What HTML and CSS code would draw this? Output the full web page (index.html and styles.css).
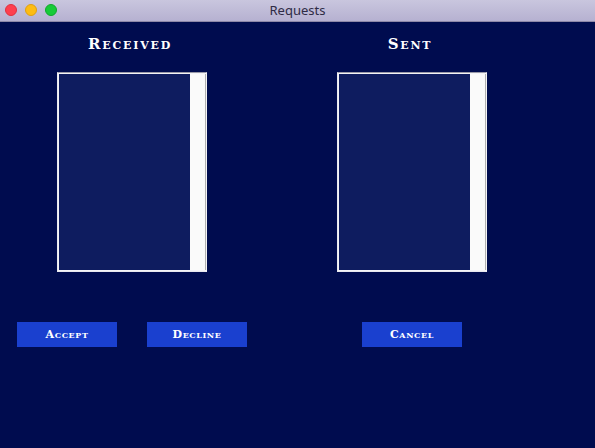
FILE: index.html
```html
<!DOCTYPE html>
<html>
<head>
<meta charset="utf-8">
<title>Requests</title>
<link rel="stylesheet" href="styles.css">
</head>
<body>
<div class="window">
  <div class="titlebar">
    <div class="lights">
      <span class="light red"></span>
      <span class="light yellow"></span>
      <span class="light green"></span>
    </div>
    <div class="title">Requests</div>
  </div>
  <div class="content">
    <div class="panels">
      <div class="panel">
        <h2 class="heading">Received</h2>
        <div class="listbox">
          <div class="list"></div>
          <div class="scrollbar"></div>
        </div>
      </div>
      <div class="panel">
        <h2 class="heading">Sent</h2>
        <div class="listbox">
          <div class="list"></div>
          <div class="scrollbar"></div>
        </div>
      </div>
    </div>
    <div class="buttons">
      <button class="btn">Accept</button>
      <button class="btn btn-decline">Decline</button>
      <button class="btn btn-cancel">Cancel</button>
    </div>
  </div>
</div>
</body>
</html>
```

FILE: styles.css
```css
html, body {
  margin: 0;
  padding: 0;
  background: #000c4f;
}
.window {
  width: 595px;
  height: 448px;
  display: flex;
  flex-direction: column;
  background: #000c4f;
  overflow: hidden;
}
.titlebar {
  height: 21px;
  border-bottom: 1px solid #8e89a8;
  background: linear-gradient(#c9c6de, #b6b1d1);
  display: flex;
  align-items: center;
  justify-content: center;
  position: relative;
}
.lights {
  position: absolute;
  left: 5px;
  top: 4px;
  display: flex;
  gap: 8px;
}
.light {
  width: 12px;
  height: 12px;
  border-radius: 50%;
  box-sizing: border-box;
}
.red { background: #fe3f4f; border: 1px solid #e0303f; }
.yellow { background: #fdbc13; border: 1px solid #e0a010; }
.green { background: #17cb38; border: 1px solid #10a82c; }
.title {
  font-family: "Noto Sans", "DejaVu Sans", sans-serif;
  font-size: 13px;
  color: #2f2b45;
  line-height: 21px;
}
.content {
  flex: 1;
  padding: 13px 0 0 0;
}
.panels {
  display: grid;
  grid-template-columns: 150px 150px;
  column-gap: 130px;
  padding-left: 57px;
}
.panel {
  display: flex;
  flex-direction: column;
  align-items: center;
}
.heading {
  margin: 0 4px 18px 0;
  font-family: "DejaVu Serif", serif;
  font-weight: bold;
  font-variant: small-caps;
  font-size: 15px;
  line-height: 19px;
  letter-spacing: 1.8px;
  color: #ffffff;
}
.listbox {
  width: 150px;
  height: 200px;
  box-sizing: border-box;
  border-top: 1px solid #9a9aa8;
  border-left: 1px solid #e8e8ee;
  border-right: 1px solid #f4f4f6;
  border-bottom: 1px solid #e8e8ee;
  padding: 1px 0 1px 1px;
  background: #f4f4f6;
  display: flex;
}
.list {
  flex: 1;
  background: #0e1c5f;
}
.scrollbar {
  width: 16px;
  box-sizing: border-box;
  background: #fafafa;
  border-right: 1px solid #b0b0b0;
}
.buttons {
  display: flex;
  padding-left: 17px;
  margin-top: 50px;
  gap: 30px;
}
.btn {
  width: 100px;
  height: 25px;
  border: none;
  padding: 0;
  margin: 0;
  background: #1a40cf;
  color: #ffffff;
  font-family: "DejaVu Serif", serif;
  font-weight: bold;
  font-variant: small-caps;
  font-size: 11px;
  letter-spacing: 0.6px;
}
.btn-cancel {
  margin-left: 85px;
}
```
